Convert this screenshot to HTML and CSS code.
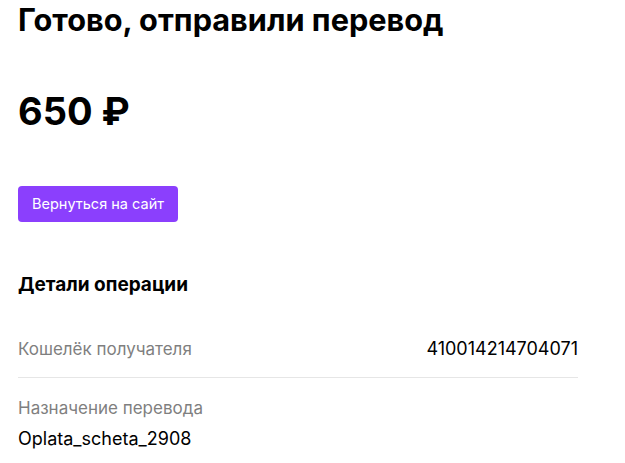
FILE: index.html
```html
<!DOCTYPE html>
<html lang="ru">

<head>
    <meta charset="UTF-8">
    <meta name="viewport" content="width=device-width, initial-scale=1.0">
    <title>Перевод</title>
    <link rel="stylesheet" href="styles.css">
</head>

<body>
    <div class="result-box">
        <h1 class="result-title">Готово, отправили перевод</h1>
        <div class="result-sum">650 ₽</div>
        <a href="#" class="back-btn">Вернуться на сайт</a>

        <div class="details">
            <div class="details-title">Детали операции</div>
            <div class="details-row">
                <div class="details-label">Кошелёк получателя</div>
                <div class="details-value">410014214704071</div>
            </div>
            <div class="details-row column">
                <div class="details-label">Назначение перевода</div>
                <div class="details-value">Oplata_scheta_2908</div>
            </div>
        </div>
    </div>
</body>

</html>
```

FILE: styles.css
```css
* {
    margin: 0;
    padding: 0;
    box-sizing: border-box;
}

a {
    text-decoration: none;
}

body {
    font-family: Inter, "Noto Sans", sans-serif;
    color: #000;
    background: #fff;
}

.result-box {
    padding: 0 18px;
    width: 596px;
}

.result-title {
    font-size: 30.7px;
    font-weight: 700;
    line-height: 40px;
}

.result-sum {
    margin-top: 46px;
    font-size: 38px;
    font-weight: 700;
    line-height: 50px;
}

.back-btn {
    display: block;
    margin-top: 50px;
    width: 160px;
    height: 36px;
    line-height: 36px;
    text-align: center;
    background: #8b3ffd;
    color: #fff;
    font-size: 14.5px;
    border-radius: 4px;
}

.details {
    margin-top: 51px;
}

.details-title {
    font-size: 19px;
    font-weight: 700;
    line-height: 24px;
}

.details-row {
    display: flex;
    justify-content: space-between;
    align-items: center;
    padding: 40px 0 16px;
    border-bottom: 1px solid #e6e6e6;
    font-size: 17px;
    line-height: 24px;
}

.details-row.column {
    flex-direction: column;
    align-items: flex-start;
    padding-top: 18px;
    border-bottom: none;
}

.details-row.column .details-value {
    margin-top: 7px;
}

.details-label {
    color: #7f7f7f;
}

.details-value {
    color: #000;
    font-size: 18px;
}
```
